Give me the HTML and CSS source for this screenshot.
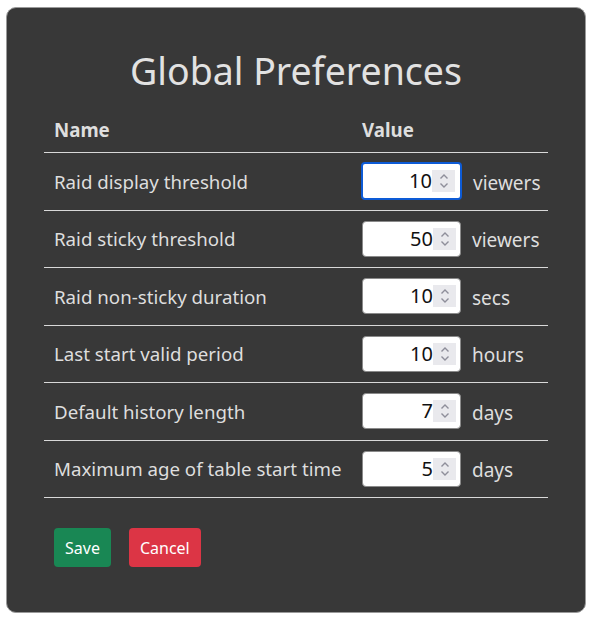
FILE: index.html
```html
<!DOCTYPE html>
<html>
<head>
<meta charset="utf-8">
<link rel="stylesheet" href="styles.css">
</head>
<body>
<div class="card">
  <h2 class="title">Global Preferences</h2>
  <table class="prefs">
    <thead>
      <tr><th class="c-name">Name</th><th>Value</th></tr>
    </thead>
    <tbody>
      <tr><td>Raid display threshold</td><td><div class="val"><span class="num focus"><span class="v">10</span><span class="spin"><svg viewBox="0 0 12 22" width="12" height="22"><path d="M2.5 8.5 L6 5 L9.5 8.5 M2.5 13.5 L6 17 L9.5 13.5" fill="none" stroke="#8e8e9a" stroke-width="1.4"/></svg></span></span><span class="unit">viewers</span></div></td></tr>
      <tr><td>Raid sticky threshold</td><td><div class="val"><span class="num"><span class="v">50</span><span class="spin"><svg viewBox="0 0 12 22" width="12" height="22"><path d="M2.5 8.5 L6 5 L9.5 8.5 M2.5 13.5 L6 17 L9.5 13.5" fill="none" stroke="#8e8e9a" stroke-width="1.4"/></svg></span></span><span class="unit">viewers</span></div></td></tr>
      <tr><td>Raid non-sticky duration</td><td><div class="val"><span class="num"><span class="v">10</span><span class="spin"><svg viewBox="0 0 12 22" width="12" height="22"><path d="M2.5 8.5 L6 5 L9.5 8.5 M2.5 13.5 L6 17 L9.5 13.5" fill="none" stroke="#8e8e9a" stroke-width="1.4"/></svg></span></span><span class="unit">secs</span></div></td></tr>
      <tr><td>Last start valid period</td><td><div class="val"><span class="num"><span class="v">10</span><span class="spin"><svg viewBox="0 0 12 22" width="12" height="22"><path d="M2.5 8.5 L6 5 L9.5 8.5 M2.5 13.5 L6 17 L9.5 13.5" fill="none" stroke="#8e8e9a" stroke-width="1.4"/></svg></span></span><span class="unit">hours</span></div></td></tr>
      <tr><td>Default history length</td><td><div class="val"><span class="num"><span class="v">7</span><span class="spin"><svg viewBox="0 0 12 22" width="12" height="22"><path d="M2.5 8.5 L6 5 L9.5 8.5 M2.5 13.5 L6 17 L9.5 13.5" fill="none" stroke="#8e8e9a" stroke-width="1.4"/></svg></span></span><span class="unit">days</span></div></td></tr>
      <tr><td>Maximum age of table start time</td><td><div class="val"><span class="num"><span class="v">5</span><span class="spin"><svg viewBox="0 0 12 22" width="12" height="22"><path d="M2.5 8.5 L6 5 L9.5 8.5 M2.5 13.5 L6 17 L9.5 13.5" fill="none" stroke="#8e8e9a" stroke-width="1.4"/></svg></span></span><span class="unit">days</span></div></td></tr>
    </tbody>
  </table>
  <div class="actions">
    <button class="btn save">Save</button>
    <button class="btn cancel">Cancel</button>
  </div>
</div>
</body>
</html>
```
FILE: styles.css
```css
html, body {
  margin: 0;
  padding: 0;
  background: #ffffff;
}
body {
  padding: 7px 6px 8px 6px;
  font-family: "Noto Sans", "Open Sans", sans-serif;
  color: #dedede;
}
.card {
  background: #383838;
  border: 1px solid #9a9a9a;
  border-radius: 10px;
  padding: 30px 37px 46px 37px;
  box-sizing: border-box;
  height: 606px;
}
.title {
  margin: 9px 0 16px 0;
  text-align: center;
  font-weight: 400;
  font-size: 37.5px;
  line-height: 48px;
  color: #e2e2e2;
}
.prefs {
  width: 100%;
  table-layout: fixed;
  border-collapse: collapse;
  font-size: 18.7px;
}
.prefs th {
  text-align: left;
  font-weight: 700;
  padding: 6px 10px 10px 10px;
  border-bottom: 1px solid #d8d8d8;
  line-height: 25px;
}
.prefs th.c-name {
  width: 288px;
}
.prefs td {
  padding: 10px 10px 10px 10px;
  border-bottom: 1px solid #d8d8d8;
  vertical-align: middle;
  height: 36.5px;
  line-height: 25px;
  white-space: nowrap;
}
.val {
  display: flex;
  align-items: center;
  gap: 11px;
}
.num {
  flex: none;
  box-sizing: border-box;
  width: 99px;
  height: 36px;
  background: #ffffff;
  border: 1px solid #8a8a8a;
  border-radius: 4px;
  display: flex;
  align-items: center;
  justify-content: flex-end;
  padding-right: 4px;
  color: #111111;
}
.num.focus {
  border: 2px solid #0d5bd6;
  width: 101px;
  height: 38px;
  padding-right: 5px;
  margin: -1px 0 -1px -1px;
}
.v {
  font-size: 20px;
  line-height: 22px;
}
.spin {
  width: 23px;
  height: 22px;
  background: #e9e9ed;
  display: flex;
  align-items: center;
  justify-content: center;
}
.spin svg { display: block; }
.unit {
  font-size: 19px;
  color: #dedede;
  padding-top: 4px;
}
.actions {
  display: flex;
  gap: 18px;
  padding: 30px 10px 0 10px;
}
.btn {
  font-family: inherit;
  font-size: 16px;
  color: #ffffff;
  border: none;
  border-radius: 4px;
  height: 39px;
  padding: 0 11px;
}
.save { background: #198754; }
.cancel { background: #dc3545; }
```
